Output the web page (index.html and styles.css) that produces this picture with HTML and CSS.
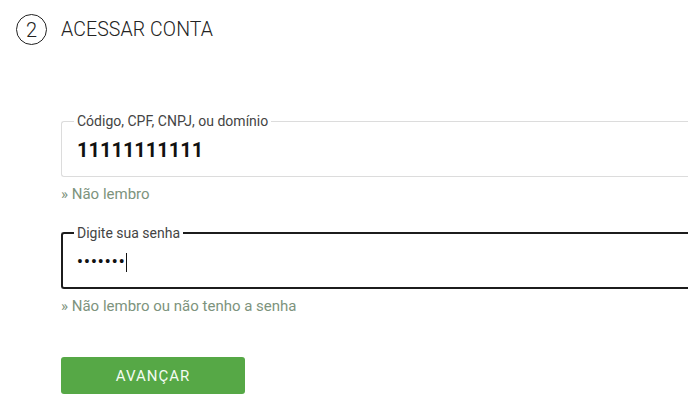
FILE: index.html
```html
<!DOCTYPE html>
<html lang="pt-BR">
<head>
<meta charset="utf-8">
<title>Acessar conta</title>
<link rel="stylesheet" href="styles.css">
</head>
<body>
<main class="step">
  <header class="step-header">
    <span class="step-number">2</span>
    <h1 class="step-title">ACESSAR CONTA</h1>
  </header>
  <form class="login-form" onsubmit="return false">
    <fieldset class="field">
      <legend class="field-label">Código, CPF, CNPJ, ou domínio</legend>
      <input class="field-input" type="text" value="11111111111">
    </fieldset>
    <a class="help-link" href="#">» Não lembro</a>
    <fieldset class="field field-focused">
      <legend class="field-label">Digite sua senha</legend>
      <div class="field-input password-display"><span class="dots">•••••••</span><span class="caret"></span></div>
    </fieldset>
    <a class="help-link" href="#">» Não lembro ou não tenho a senha</a>
    <button class="btn-primary" type="submit">AVANÇAR</button>
  </form>
</main>
</body>
</html>
```

FILE: styles.css
```css
html, body {
  margin: 0;
  padding: 0;
  background: #ffffff;
  overflow: hidden;
}
body {
  font-family: Roboto, "Liberation Sans", Arial, sans-serif;
  color: #222;
}
.step {
  padding: 14px 0 0 16px;
}
.step-header {
  display: flex;
  align-items: center;
  gap: 14px;
  height: 31px;
}
.step-number {
  box-sizing: border-box;
  width: 31px;
  height: 31px;
  border: 1.5px solid #222;
  border-radius: 50%;
  display: flex;
  align-items: center;
  justify-content: center;
  font-size: 20px;
  font-weight: 300;
  color: #222;
}
.step-title {
  margin: 0;
  font-size: 19.5px;
  font-weight: 300;
  color: #222;
  letter-spacing: 0.1px;
}
.login-form {
  margin: 67px 0 0 45px;
  display: flex;
  flex-direction: column;
  align-items: flex-start;
}
.field {
  box-sizing: border-box;
  width: 627px;
  margin: 0;
  padding: 0 12px 12px 12px;
  border: 1px solid #dcdcdc;
  border-right: 0;
  border-radius: 3px 0 0 3px;
}
.field-label {
  padding: 0 3px;
  font-size: 14px;
  line-height: 18px;
  color: #444;
}
.field-input {
  display: block;
  box-sizing: border-box;
  width: 100%;
  height: 28px;
  margin-top: 6px;
  padding: 0 3px;
  border: 0;
  outline: none;
  background: transparent;
  font-family: Roboto, "Liberation Sans", Arial, sans-serif;
  font-size: 20px;
  font-weight: 700;
  line-height: 28px;
  color: #111;
}
.field-focused {
  border: 2px solid #1c1c1c;
  border-right: 0;
  padding: 0 11px 11px 11px;
}
.password-display {
  display: flex;
  align-items: center;
}
.dots {
  font-size: 16px;
  letter-spacing: 1.2px;
}
.caret {
  display: inline-block;
  width: 1.5px;
  height: 19px;
  background: #111;
}
.help-link {
  margin-top: 7px;
  font-size: 15px;
  line-height: 21px;
  color: #7d937d;
  text-decoration: none;
}
.help-link + .field {
  margin-top: 19px;
}
.btn-primary {
  margin-top: 40px;
  width: 184px;
  height: 37px;
  border: 0;
  border-radius: 3px;
  background: #56a846;
  color: #f4fbf2;
  font-family: Roboto, "Liberation Sans", Arial, sans-serif;
  font-size: 15px;
  font-weight: 400;
  letter-spacing: 1px;
  cursor: pointer;
}
```
